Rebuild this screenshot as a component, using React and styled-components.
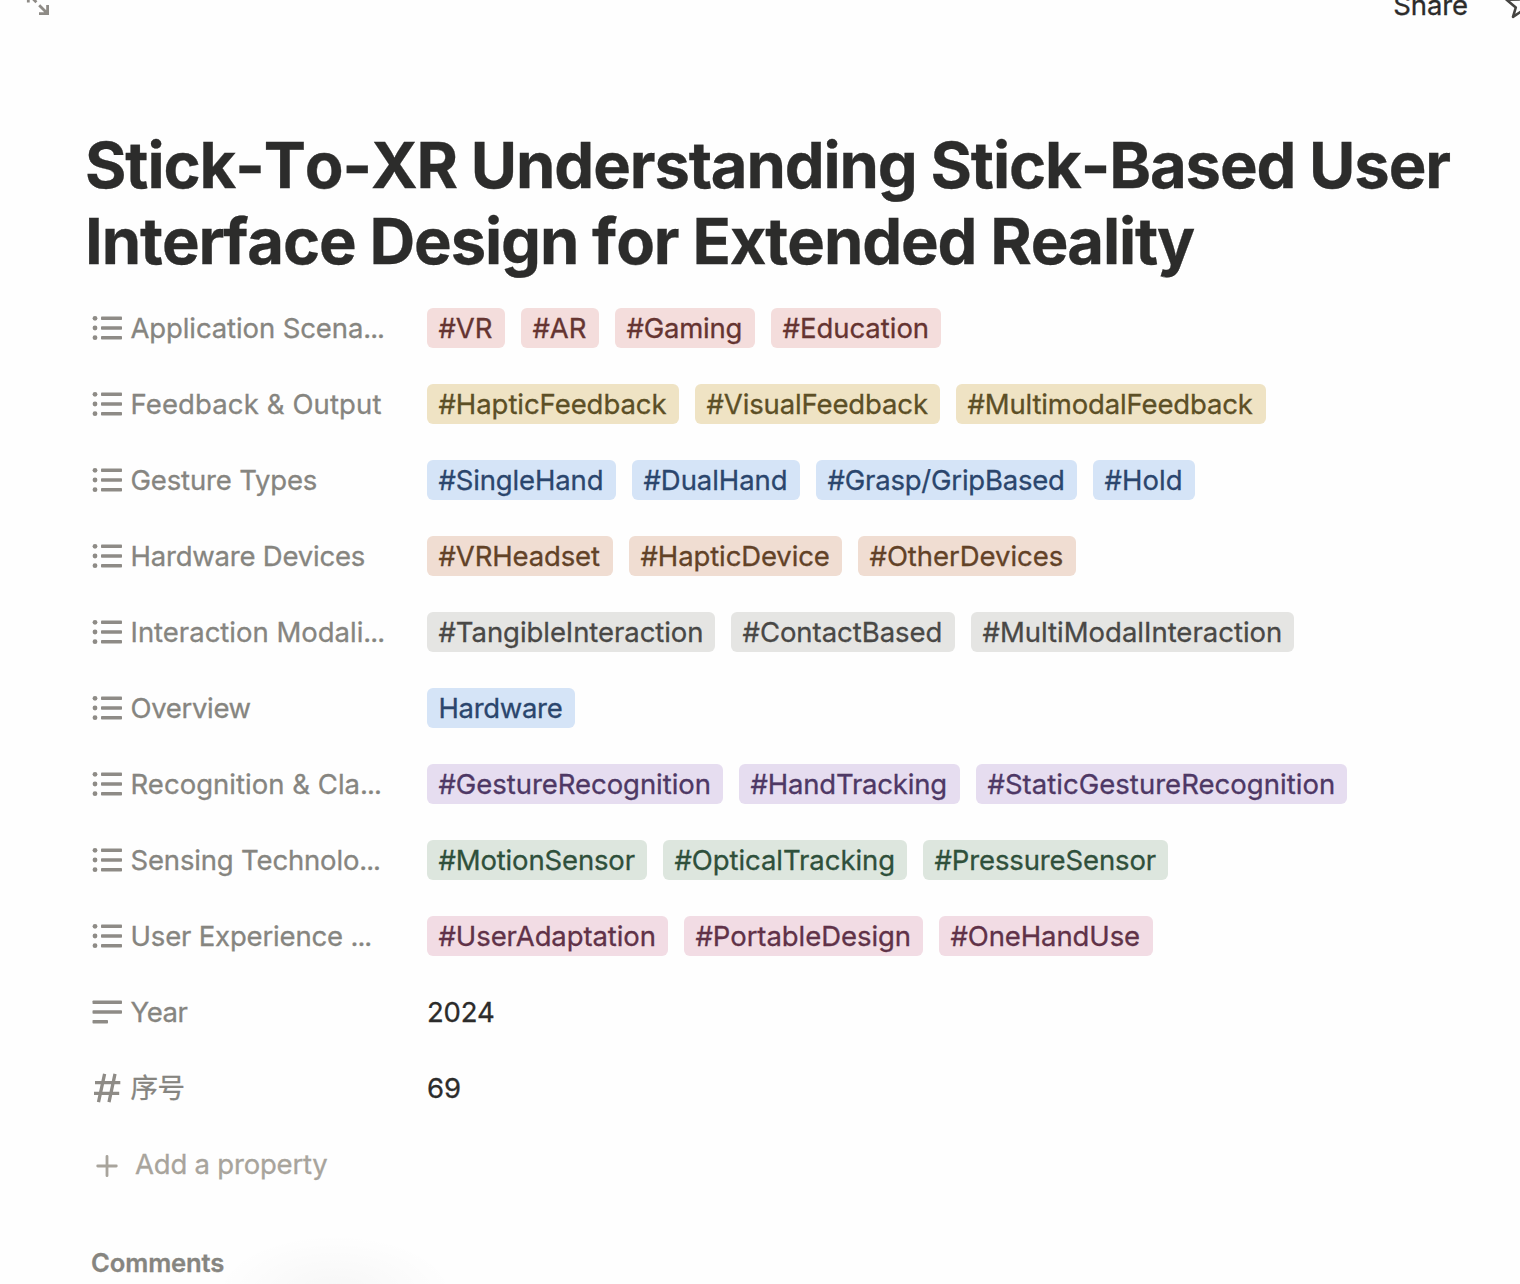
import React from "react";
import styled, { createGlobalStyle } from "styled-components";

const GlobalStyle = createGlobalStyle`
  html, body { margin: 0; background: #fefefe; }
  body { overflow: hidden; }
  * { box-sizing: border-box; }
`;

const palette = {
  red: { bg: "#f4dddc", fg: "#653431" },
  yellow: { bg: "#efe3c4", fg: "#5c4f26" },
  blue: { bg: "#d5e4f7", fg: "#2b466d" },
  orange: { bg: "#f0ddd2", fg: "#624227" },
  gray: { bg: "#e5e5e3", fg: "#494846" },
  purple: { bg: "#e6ddf0", fg: "#4e3865" },
  green: { bg: "#dde6de", fg: "#2f503b" },
  pink: { bg: "#f2dce4", fg: "#603248" },
};

const Page = styled.div`
  width: 1520px;
  height: 1284px;
  overflow: hidden;
  display: flex;
  flex-direction: column;
  background: #fefefe;
  color: #2c2c2b;
  font-family: Inter, "Noto Sans CJK SC", sans-serif;
  font-size: 27.5px;
  line-height: 40px;
  -webkit-text-stroke: 0.3px;
`;

const TopBar = styled.header`
  display: flex;
  justify-content: space-between;
  align-items: flex-start;
  height: 127px;
  flex: none;
  padding-left: 26px;
`;

const Actions = styled.div`
  display: flex;
  gap: 38px;
  margin-right: -20px;
`;

const Share = styled.span`
  margin-top: -15px;
  letter-spacing: -0.13px;
`;

const Title = styled.h1`
  margin: 0;
  padding-left: 85px;
  font-size: 63.3px;
  line-height: 76px;
  font-weight: 700;
  font-kerning: none;
  letter-spacing: -1.12px;
  white-space: nowrap;
`;

const TitleLine = styled.span`
  display: block;
`;

const Properties = styled.section`
  display: flex;
  flex-direction: column;
  gap: 36px;
  padding: 29px 0 0 91px;
`;

const Row = styled.div`
  display: flex;
  align-items: center;
  height: 40px;
`;

const Name = styled.div`
  display: flex;
  align-items: center;
  gap: 7.5px;
  width: 336px;
  flex: none;
  color: #868580;
  white-space: nowrap;
`;

const Label = styled.span`
  letter-spacing: ${(p) => (p.$spacing || 0) + 0.27}px;
`;

const Ellipsis = styled.span`
  letter-spacing: -1px;
`;

const Value = styled.span`
  letter-spacing: -0.15px;
`;

const Tags = styled.div`
  display: flex;
  gap: 16px;
`;

const Tag = styled.span`
  width: ${(p) => p.$width}px;
  height: 40px;
  padding-left: 11.5px;
  border-radius: 6px;
  white-space: nowrap;
  letter-spacing: ${(p) => (p.$spacing || 0) + 0.27}px;
  background: ${(p) => palette[p.$tone].bg};
  color: ${(p) => palette[p.$tone].fg};
`;

const AddProperty = styled.div`
  display: flex;
  align-items: center;
  gap: 12px;
  height: 40px;
  color: #a8a49c;
  letter-spacing: -0.2px;
`;

const Footer = styled.footer`
  position: relative;
  flex: 1;
  padding: 58px 0 0 91px;
`;

const Comments = styled.span`
  position: relative;
  font-size: 25.6px;
  font-weight: 600;
  letter-spacing: -0.12px;
  color: #868580;
`;

const Shadow = styled.div`
  position: absolute;
  left: 215px;
  top: 50px;
  width: 240px;
  height: 120px;
  background: radial-gradient(closest-side, rgba(0, 0, 0, 0.03), rgba(0, 0, 0, 0));
`;

const Icon = styled.svg`
  display: block;
  flex: none;
  overflow: visible;
`;

const ListIcon = () => (
  <Icon width="32" height="32" viewBox="0 0 32 32" fill="#8e8b86">
    <circle cx="4" cy="6.3" r="2.4" />
    <circle cx="4" cy="16" r="2.4" />
    <circle cx="4" cy="25.7" r="2.4" />
    <rect x="10" y="4.5" width="21" height="3.6" rx="0.8" />
    <rect x="10" y="14.2" width="21" height="3.6" rx="0.8" />
    <rect x="10" y="23.9" width="21" height="3.6" rx="0.8" />
  </Icon>
);

const TextIcon = () => (
  <Icon width="32" height="32" viewBox="0 0 32 32" fill="#8e8b86">
    <rect x="1.5" y="4.5" width="29.5" height="3.6" rx="0.8" />
    <rect x="1.5" y="14.2" width="29.5" height="3.6" rx="0.8" />
    <rect x="1.5" y="23.9" width="15.5" height="3.6" rx="0.8" />
  </Icon>
);

const NumberIcon = () => (
  <Icon width="32" height="32" viewBox="0 0 32 32" fill="none" stroke="#8e8b86" strokeWidth="3.3">
    <path d="M13.6 1.8 7.5 30.2M24 1.8 18 30.2M4 10.6H29.3M3 21.4H28.2" />
  </Icon>
);

const PlusIcon = () => (
  <Icon width="32" height="32" viewBox="0 0 32 32" fill="none" stroke="#a8a49c" strokeWidth="2.8" strokeLinecap="round">
    <path d="M16 8.3V27.7M6.7 18H25.3" />
  </Icon>
);

const ExpandIcon = () => (
  <Icon width="24" height="17" viewBox="0 0 24 17" fill="none" stroke="#8e8b86" strokeWidth="2.8">
    <path d="M2.3 2.6V-7M3 -5.2 10.4 2.2M13.2 5.2 21 13M21.6 5V13.6H13" />
  </Icon>
);

const StarIcon = () => (
  <Icon width="34" height="22" viewBox="0 0 34 22" fill="none" stroke="#454441" strokeWidth="2.6" strokeLinejoin="round">
    <path d="M17.5 -13 21.2 -0.8 34 -0.5 24.2 7.3 28 17.5 17 10.3 7 16.8 9.8 7.5 0.6 -0.2 13.3 -0.6Z" />
  </Icon>
);

const icons = { list: ListIcon, text: TextIcon, number: NumberIcon };

/* Each tag is [text, width, letter-spacing]. */
const rows = [
  { name: "Application Scena", more: true, spacing: -0.38, tone: "red", tags: [["#VR", 78, -0.33], ["#AR", 78, -0.33], ["#Gaming", 140, -0.5], ["#Education", 170, -0.3]] },
  { name: "Feedback & Output", spacing: -0.15, tone: "yellow", tags: [["#HapticFeedback", 252, -0.33], ["#VisualFeedback", 245, -0.4], ["#MultimodalFeedback", 310, -0.42]] },
  { name: "Gesture Types", spacing: -0.44, tone: "blue", tags: [["#SingleHand", 189, -0.42], ["#DualHand", 168, -0.33], ["#Grasp/GripBased", 261, -0.48], ["#Hold", 102, -0.2]] },
  { name: "Hardware Devices", spacing: -0.48, tone: "orange", tags: [["#VRHeadset", 186, -0.4], ["#HapticDevice", 213, -0.38], ["#OtherDevices", 218, -0.31]] },
  { name: "Interaction Modali", more: true, spacing: -0.28, tone: "gray", tags: [["#TangibleInteraction", 288, -0.33], ["#ContactBased", 224, -0.31], ["#MultiModalInteraction", 323, -0.27]] },
  { name: "Overview", spacing: -0.6, tone: "blue", tags: [["Hardware", 148, -0.6]] },
  { name: "Recognition & Cla", more: true, spacing: -0.24, tone: "purple", tags: [["#GestureRecognition", 296, -0.32], ["#HandTracking", 221, -0.46], ["#StaticGestureRecognition", 371, -0.24]] },
  { name: "Sensing Technolo", more: true, spacing: -0.44, tone: "green", tags: [["#MotionSensor", 220, -0.43], ["#OpticalTracking", 244, -0.34], ["#PressureSensor", 245, -0.4]] },
  { name: "User Experience ", more: true, spacing: -0.44, tone: "pink", tags: [["#UserAdaptation", 241, -0.36], ["#PortableDesign", 239, -0.33], ["#OneHandUse", 214, -0.38]] },
  { name: "Year", spacing: -0.7, icon: "text", value: "2024" },
  { name: "序号", spacing: -0.8, icon: "number", value: "69" },
];

export default function App() {
  return (
    <Page>
      <GlobalStyle />
      <TopBar>
        <ExpandIcon />
        <Actions>
          <Share>Share</Share>
          <StarIcon />
        </Actions>
      </TopBar>
      <Title>
        <TitleLine>Stick-To-XR Understanding Stick-Based User</TitleLine>
        <TitleLine>Interface Design for Extended Reality</TitleLine>
      </Title>
      <Properties>
        {rows.map((row) => {
          const RowIcon = icons[row.icon || "list"];
          return (
            <Row key={row.name}>
              <Name>
                <RowIcon />
                <Label $spacing={row.spacing}>
                  {row.name}
                  {row.more && <Ellipsis>...</Ellipsis>}
                </Label>
              </Name>
              {row.tags ? (
                <Tags>
                  {row.tags.map(([text, width, spacing]) => (
                    <Tag key={text} $tone={row.tone} $width={width} $spacing={spacing}>{text}</Tag>
                  ))}
                </Tags>
              ) : (
                <Value>{row.value}</Value>
              )}
            </Row>
          );
        })}
        <AddProperty>
          <PlusIcon />
          <span>Add a property</span>
        </AddProperty>
      </Properties>
      <Footer>
        <Shadow />
        <Comments>Comments</Comments>
      </Footer>
    </Page>
  );
}
